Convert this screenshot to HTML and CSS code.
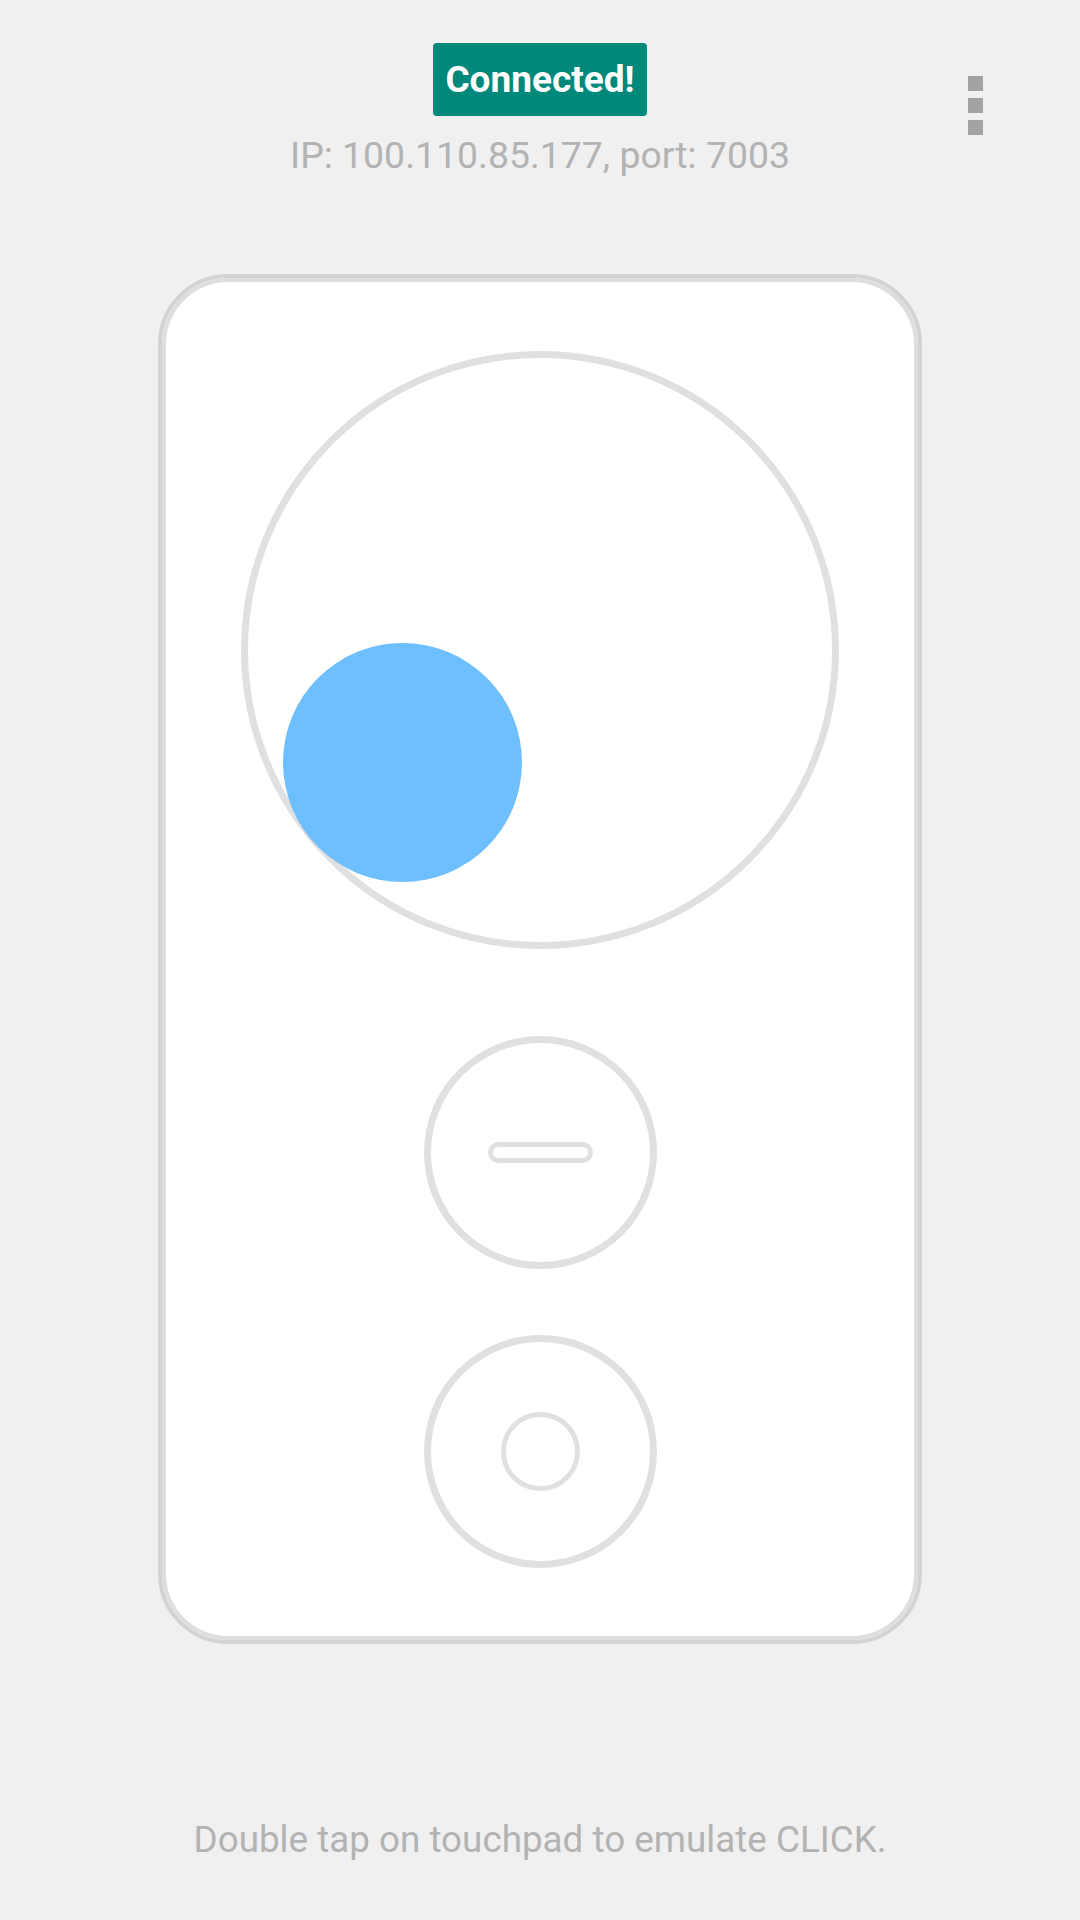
FILE: index.html
```html
<!DOCTYPE html>
<html>
<head>
<meta charset="utf-8">
<link rel="stylesheet" href="styles.css">
</head>
<body>
<div class="screen">
  <header class="header">
    <div class="badge">Connected!</div>
    <div class="ip">IP: 100.110.85.177, port: 7003</div>
    <div class="menu"><span></span><span></span><span></span></div>
  </header>
  <main class="pad">
    <div class="joystick">
      <div class="knob"></div>
    </div>
    <div class="btn"><div class="pill"></div></div>
    <div class="btn btn-home"><div class="dot"></div></div>
  </main>
  <footer class="hint">Double tap on touchpad to emulate CLICK.</footer>
</div>
</body>
</html>
```
FILE: styles.css
```css
* { box-sizing: border-box; }
html, body { margin: 0; padding: 0; }
body {
  background: #f0f0f0;
  font-family: Roboto, "Noto Sans", sans-serif;
  width: 1080px;
  height: 1920px;
  overflow: hidden;
}
.screen {
  display: flex;
  flex-direction: column;
  align-items: center;
}
.header {
  position: relative;
  width: 100%;
  display: flex;
  flex-direction: column;
  align-items: center;
  padding-top: 43px;
}
.badge {
  background: #00897b;
  color: #ffffff;
  font-weight: 700;
  font-size: 37px;
  height: 73px;
  padding: 0 12px;
  border-radius: 4px;
  display: flex;
  align-items: center;
  justify-content: center;
}
.ip {
  margin-top: 18px;
  color: #b3b3b3;
  font-size: 37.4px;
  line-height: 42px;
}
.menu {
  position: absolute;
  left: 968px;
  top: 76px;
  display: flex;
  flex-direction: column;
  gap: 7px;
}
.menu span {
  display: block;
  width: 15px;
  height: 15px;
  background: #a2a2a2;
}
.pad {
  margin-top: 98px;
  width: 764px;
  height: 1370px;
  background: #ffffff;
  border: 4px solid #d3d3d3;
  box-shadow: inset 0 0 0 4px #dedede;
  border-radius: 70px;
  display: flex;
  flex-direction: column;
  align-items: center;
  padding-top: 73px;
}
.joystick {
  position: relative;
  width: 598px;
  height: 598px;
  border: 7px solid #e0e0e0;
  border-radius: 50%;
}
.knob {
  position: absolute;
  left: 35px;
  top: 285px;
  width: 239px;
  height: 239px;
  border-radius: 50%;
  background: #6ebfff;
}
.btn {
  margin-top: 87px;
  width: 233px;
  height: 233px;
  border: 7px solid #e0e0e0;
  border-radius: 50%;
  display: flex;
  align-items: center;
  justify-content: center;
}
.btn-home { margin-top: 66px; }
.pill {
  width: 105px;
  height: 21px;
  border: 5px solid #e0e0e0;
  border-radius: 11px;
}
.dot {
  width: 79px;
  height: 79px;
  border: 5px solid #e0e0e0;
  border-radius: 50%;
}
.hint {
  margin-top: 175px;
  color: #b3b3b3;
  font-size: 36.8px;
  line-height: 42px;
}
```
